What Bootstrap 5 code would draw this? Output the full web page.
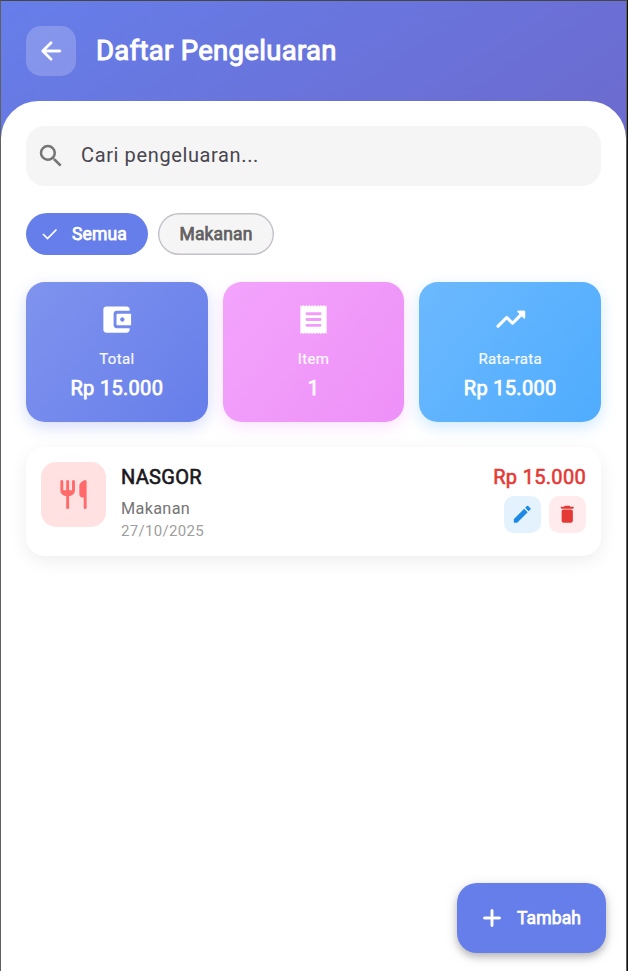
<!DOCTYPE html>
<html lang="id">
<head>
<meta charset="utf-8">
<meta name="viewport" content="width=device-width, initial-scale=1">
<title>Daftar Pengeluaran</title>
<link href="https://cdn.jsdelivr.net/npm/bootstrap@5.3.0/dist/css/bootstrap.min.css" rel="stylesheet">
<style>
body{font-family:Roboto,sans-serif;height:971px;overflow:hidden;background:#111;letter-spacing:.3125px;line-height:1.2}
svg{display:block;fill:currentColor;flex:none}
.app-frame{width:627px;height:971px;border:1px solid #606060;border-top-color:#454545;border-bottom:0;background:linear-gradient(147.2deg,#667eea,#764ba2)}
.app-head{height:100px;padding:0 25px;gap:20px}
.back-btn{width:50px;height:50px;border-radius:15px;background:rgba(255,255,255,.2)}
.bold{-webkit-text-stroke:.75px currentColor;font-weight:400}
.app-title{font-size:27.5px;letter-spacing:.3px;margin:0;padding-bottom:2px;-webkit-text-stroke-width:1px}
.sheet{border-radius:37.5px 37.5px 0 0;padding:25px 25px 0}
.search-box{height:60px;border-radius:18.75px;background:#f5f5f5;padding:0 10px;gap:15px;font-size:20px;letter-spacing:.625px;color:#49454f}
.search-box span{padding-bottom:2px}
.search-box svg{color:#757575}
.chips{margin-top:27px;gap:10px}
.chip{height:42px;border-radius:21px;font-size:17.5px;letter-spacing:.125px}
.chip-on{width:122px;background:#667eea;padding-left:16px;gap:14px}
.chip-off{width:116px;background:#f5f5f5;box-shadow:inset 0 0 0 1.4px #c6c0cc;color:#616161}
.stats{margin-top:27px;gap:15px}
.stat{flex:1 1 0;height:140px;border-radius:18.75px;padding-top:20px}
.stat-a{background:linear-gradient(127.6deg,#7f93ee,#667eea);box-shadow:0 5px 15px rgba(102,126,234,.27)}
.stat-b{background:linear-gradient(127.6deg,#f3a4fc,#ee90f8);box-shadow:0 5px 15px rgba(240,147,251,.27)}
.stat-c{background:linear-gradient(127.6deg,#6cb9fe,#4facfe);box-shadow:0 5px 15px rgba(79,172,254,.27)}
.stat-label{font-size:15px;margin-top:13px;opacity:.95;line-height:18px;-webkit-text-stroke:.2px currentColor}
.stat-val{font-size:20px;margin-top:8px;line-height:24px}
.expense{margin-top:25px;height:109px;border-radius:18.75px;background:#fff;padding:15px;box-shadow:0 5px 18px rgba(0,0,0,.07)}
.cat-icon{width:65px;height:65px;border-radius:15px;background:#ffe1e1;color:#ff6b6b}
.exp-text{margin-left:15px;padding-top:3px}
.exp-name{font-size:20px;line-height:24px;color:#1a181d;-webkit-text-stroke-width:.6px}
.exp-cat{font-size:16.25px;line-height:20px;margin-top:10px;color:#757575}
.exp-date{font-size:15px;line-height:18px;margin-top:3px;color:#9e9e9e}
.exp-amt{font-size:20px;line-height:24px;margin-top:3px;color:#e53935;-webkit-text-stroke-width:.6px}
.act{width:37.5px;height:37.5px;border-radius:10px}
.acts{gap:7.5px;margin-top:6.5px}
.act-edit{background:#e3f2fd;color:#1e88e5}
.act-del{background:#ffebee;color:#e53935}
.fab{position:absolute;left:457px;top:883px;width:149px;height:70px;border-radius:20px;background:#667eea;padding-left:20px;gap:10px;font-size:17.5px;letter-spacing:.125px;box-shadow:0 4px 7px rgba(0,0,0,.2),0 3px 14px rgba(0,0,0,.13)}
</style>
<script src="https://cdn.jsdelivr.net/npm/bootstrap@5.3.0/dist/js/bootstrap.bundle.min.js"></script>
</head>
<body>
<div class="app-frame d-flex flex-column">
  <header class="app-head d-flex align-items-center text-white">
    <div class="back-btn d-flex align-items-center justify-content-center">
      <svg width="30" height="30" viewBox="0 0 24 24" stroke="currentColor" stroke-width=".3"><path d="M19 11H7.83l4.88-4.88c.39-.39.39-1.03 0-1.42-.39-.39-1.02-.39-1.41 0l-6.59 6.59c-.39.39-.39 1.02 0 1.41l6.59 6.59c.39.39 1.02.39 1.41 0 .39-.39.39-1.02 0-1.41L7.83 13H19c.55 0 1-.45 1-1s-.45-1-1-1z"/></svg>
    </div>
    <h1 class="app-title bold">Daftar Pengeluaran</h1>
  </header>
  <main class="sheet bg-white flex-grow-1">
    <div class="search-box d-flex align-items-center">
      <svg width="30" height="30" viewBox="0 0 24 24"><path d="M15.5 14h-.79l-.28-.27A6.47 6.47 0 0 0 16 9.5 6.5 6.5 0 1 0 9.5 16c1.61 0 3.09-.59 4.23-1.57l.27.28v.79l5 4.99L20.49 19l-4.99-5zm-6 0a4.5 4.5 0 1 1 0-9 4.5 4.5 0 0 1 0 9z"/></svg>
      <span>Cari pengeluaran...</span>
    </div>
    <div class="chips d-flex">
      <div class="chip chip-on d-flex align-items-center text-white"><svg width="16" height="14" viewBox="0 0 16 14"><path d="M1 7l4.5 4.5L14.5 2.5" fill="none" stroke="currentColor" stroke-width="1.7"/></svg><span class="bold">Semua</span></div>
      <div class="chip chip-off d-flex align-items-center justify-content-center"><span class="bold">Makanan</span></div>
    </div>
    <div class="stats d-flex text-white text-center">
      <div class="stat stat-a d-flex flex-column align-items-center">
        <svg width="35" height="35" viewBox="0 0 24 24"><path d="M10 16V8c0-1.1.89-2 2-2h9V5c0-1.1-.9-2-2-2H5c-1.11 0-2 .9-2 2v14c0 1.1.89 2 2 2h14c1.1 0 2-.9 2-2v-1h-9c-1.11 0-2-.9-2-2zm3-8c-.55 0-1 .45-1 1v6c0 .55.45 1 1 1h9V8h-9zm3 5.5c-.83 0-1.5-.67-1.5-1.5s.67-1.5 1.5-1.5 1.5.67 1.5 1.5-.67 1.5-1.5 1.5z"/></svg>
        <div class="stat-label">Total</div><div class="stat-val bold">Rp 15.000</div>
      </div>
      <div class="stat stat-b d-flex flex-column align-items-center">
        <svg width="35" height="35" viewBox="0 0 24 24"><path fill-rule="evenodd" d="M20 3l-1-1-1 1-1-1-1 1-1-1-1 1-1-1-1 1-1-1-1 1-1-1-1 1-1-1-1 1-1-1-1 1-1-1v20l1-1 1 1 1-1 1 1 1-1 1 1 1-1 1 1 1-1 1 1 1-1 1 1 1-1 1 1 1-1 1 1 1-1 1 1V2zM7.5 15h9a1 1 0 0 1 0 2h-9a1 1 0 0 1 0-2zm0-4h9a1 1 0 0 1 0 2h-9a1 1 0 0 1 0-2zm0-4h9a1 1 0 0 1 0 2h-9a1 1 0 0 1 0-2z"/></svg>
        <div class="stat-label">Item</div><div class="stat-val bold">1</div>
      </div>
      <div class="stat stat-c d-flex flex-column align-items-center">
        <svg width="35" height="35" viewBox="0 0 24 24" stroke="currentColor" stroke-width=".2"><path d="M16.85 6.85l1.44 1.44-4.88 4.88-3.29-3.29a.996.996 0 0 0-1.41 0l-6 6.01a.996.996 0 1 0 1.41 1.41L9.41 12l3.29 3.29c.39.39 1.02.39 1.41 0l5.59-5.58 1.44 1.44a.5.5 0 0 0 .85-.35V6.5a.48.48 0 0 0-.49-.5h-4.29a.5.5 0 0 0-.36.85z"/></svg>
        <div class="stat-label">Rata-rata</div><div class="stat-val bold">Rp 15.000</div>
      </div>
    </div>
    <div class="expense d-flex">
      <div class="cat-icon d-flex align-items-center justify-content-center">
        <svg width="35" height="35" viewBox="0 0 24 24"><path d="M16 6v6c0 1.1.9 2 2 2h1v7c0 .55.45 1 1 1s1-.45 1-1V3.13c0-.65-.61-1.13-1.24-.98C17.6 2.68 16 4.51 16 6zm-5 3H9V3c0-.55-.45-1-1-1s-1 .45-1 1v6H5V3c0-.55-.45-1-1-1s-1 .45-1 1v6c0 2.21 1.79 4 4 4v8c0 .55.45 1 1 1s1-.45 1-1v-8c2.21 0 4-1.79 4-4V3c0-.55-.45-1-1-1s-1 .45-1 1v6z"/></svg>
      </div>
      <div class="exp-text flex-grow-1">
        <div class="exp-name bold">NASGOR</div>
        <div class="exp-cat">Makanan</div>
        <div class="exp-date">27/10/2025</div>
      </div>
      <div class="d-flex flex-column align-items-end">
        <div class="exp-amt bold">Rp 15.000</div>
        <div class="acts d-flex">
          <div class="act act-edit d-flex align-items-center justify-content-center"><svg width="22.5" height="22.5" viewBox="0 0 24 24"><path d="M3 17.46v3.04c0 .28.22.5.5.5h3.04c.13 0 .26-.05.35-.15L17.81 9.94l-3.75-3.75L3.15 17.1c-.1.1-.15.22-.15.36zM20.71 7.04a.996.996 0 0 0 0-1.41l-2.34-2.34a.996.996 0 0 0-1.41 0l-1.83 1.83 3.75 3.75 1.83-1.83z"/></svg></div>
          <div class="act act-del d-flex align-items-center justify-content-center"><svg width="22.5" height="22.5" viewBox="0 0 24 24"><path d="M6 19c0 1.1.9 2 2 2h8c1.1 0 2-.9 2-2V9c0-1.1-.9-2-2-2H8c-1.1 0-2 .9-2 2v10zM18 4h-2.5l-.71-.71c-.18-.18-.44-.29-.7-.29H9.91c-.26 0-.52.11-.7.29L8.5 4H6c-.55 0-1 .45-1 1s.45 1 1 1h12c.55 0 1-.45 1-1s-.45-1-1-1z"/></svg></div>
        </div>
      </div>
    </div>
  </main>
</div>
<div class="fab d-flex align-items-center text-white">
  <svg width="30" height="30" viewBox="0 0 24 24" stroke="currentColor" stroke-width=".3"><path d="M18 13h-5v5c0 .55-.45 1-1 1s-1-.45-1-1v-5H6c-.55 0-1-.45-1-1s.45-1 1-1h5V6c0-.55.45-1 1-1s1 .45 1 1v5h5c.55 0 1 .45 1 1s-.45 1-1 1z"/></svg>
  <span class="bold">Tambah</span>
</div>
</body>
</html>
